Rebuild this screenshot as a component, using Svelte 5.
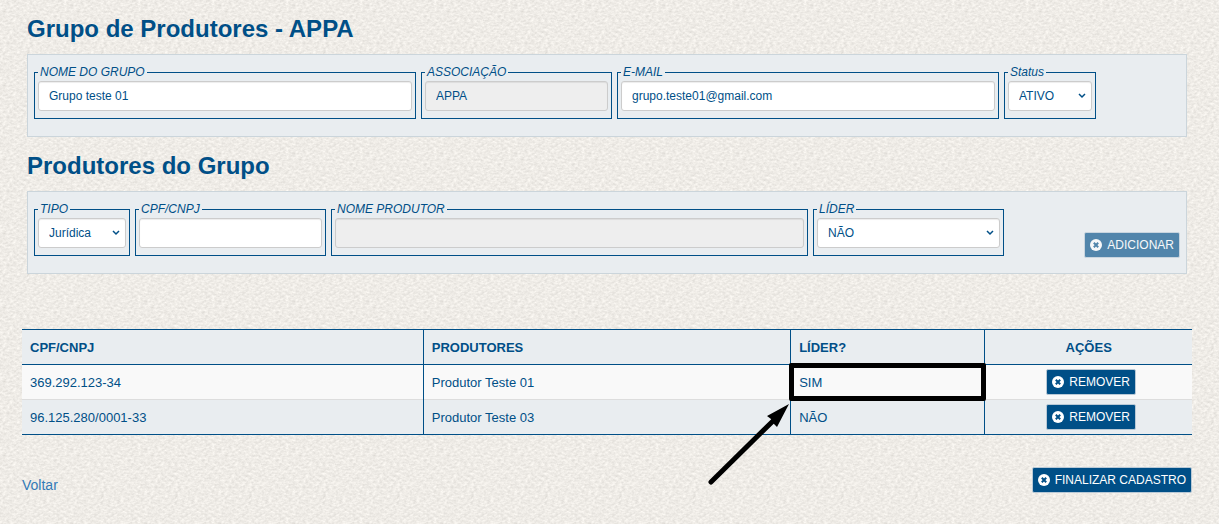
<script lang="ts">
  type Producer = { doc: string; name: string; leader: boolean };

  let groupName = $state('Grupo teste 01');
  let email = $state('grupo.teste01@gmail.com');
  let status = $state('ATIVO');

  let kind = $state('Jurídica');
  let doc = $state('');
  let producerName = $state('');
  let leader = $state('NÃO');

  let producers = $state<Producer[]>([
    { doc: '369.292.123-34', name: 'Produtor Teste 01', leader: true },
    { doc: '96.125.280/0001-33', name: 'Produtor Teste 03', leader: false }
  ]);

  function remove(i: number) {
    producers.splice(i, 1);
  }

  function add() {
    producers.push({ doc, name: producerName, leader: leader === 'SIM' });
    doc = '';
  }
</script>

{#snippet icon()}
  <svg class="icon" viewBox="0 0 12 12" aria-hidden="true">
    <circle cx="6" cy="6" r="6" fill="#fff" />
    <path d="M3.8 3.8L8.2 8.2M8.2 3.8L3.8 8.2" stroke="#004f87" stroke-width="2" />
  </svg>
{/snippet}

<main>
  <h1>Grupo de Produtores - APPA</h1>
  <form class="panel group-row">
    <fieldset>
      <legend><label for="group-name">NOME DO GRUPO</label></legend>
      <input id="group-name" type="text" bind:value={groupName} />
    </fieldset>
    <fieldset>
      <legend><label for="association">ASSOCIAÇÃO</label></legend>
      <input id="association" type="text" value="APPA" disabled />
    </fieldset>
    <fieldset>
      <legend><label for="email">E-MAIL</label></legend>
      <input id="email" type="email" bind:value={email} />
    </fieldset>
    <fieldset>
      <legend><label for="status">Status</label></legend>
      <select id="status" bind:value={status}>
        <option>ATIVO</option>
        <option>INATIVO</option>
      </select>
    </fieldset>
  </form>

  <h1>Produtores do Grupo</h1>
  <form class="panel producer-row">
    <fieldset>
      <legend><label for="kind">TIPO</label></legend>
      <select id="kind" bind:value={kind}>
        <option>Jurídica</option>
        <option>Física</option>
      </select>
    </fieldset>
    <fieldset>
      <legend><label for="doc">CPF/CNPJ</label></legend>
      <input id="doc" type="text" bind:value={doc} />
    </fieldset>
    <fieldset>
      <legend><label for="producer">NOME PRODUTOR</label></legend>
      <input id="producer" type="text" bind:value={producerName} disabled />
    </fieldset>
    <fieldset>
      <legend><label for="leader">LÍDER</label></legend>
      <select id="leader" bind:value={leader}>
        <option>NÃO</option>
        <option>SIM</option>
      </select>
    </fieldset>
    <button class="btn add" type="button" disabled={!producerName} onclick={add}>
      {@render icon()}ADICIONAR
    </button>
  </form>

  <table>
    <thead>
      <tr>
        <th class="col-doc">CPF/CNPJ</th>
        <th class="col-name">PRODUTORES</th>
        <th class="col-leader">LÍDER?</th>
        <th class="col-actions">AÇÕES</th>
      </tr>
    </thead>
    <tbody>
      {#each producers as p, i}
        <tr>
          <td>{p.doc}</td>
          <td>{p.name}</td>
          <td class:marked={p.leader}>
            {p.leader ? 'SIM' : 'NÃO'}
            {#if p.leader}
              <!-- Arrow pointing at the leader cell -->
              <svg class="arrow" viewBox="0 0 84 84" aria-hidden="true">
                <path d="M4 78L66 17" stroke="#000" stroke-width="5" stroke-linecap="round" />
                <path d="M82 0L60 12L64 15L66 19L70 23Z" fill="#000" />
              </svg>
            {/if}
          </td>
          <td class="actions">
            <button class="btn" type="button" onclick={() => remove(i)}>
              {@render icon()}REMOVER
            </button>
          </td>
        </tr>
      {/each}
    </tbody>
  </table>

  <footer>
    <a href="#voltar">Voltar</a>
    <button class="btn" type="button">{@render icon()}FINALIZAR CADASTRO</button>
  </footer>
</main>

<style>
  :global(body) {
    background-color: #eeebe6;
    background-image: url("data:image/svg+xml,%3Csvg xmlns='http://www.w3.org/2000/svg' width='74' height='74'%3E%3Cfilter id='n' x='0' y='0' width='100%25' height='100%25' color-interpolation-filters='sRGB'%3E%3CfeTurbulence type='fractalNoise' baseFrequency='.3 .45' numOctaves='3' stitchTiles='stitch'/%3E%3CfeColorMatrix values='.16 0 0 0 .857 .16 0 0 0 .845 .16 0 0 0 .825 0 0 0 0 1'/%3E%3C/filter%3E%3Crect width='74' height='74' filter='url(%23n)'/%3E%3C/svg%3E");
  }

  main {
    padding: 15px 27px 30px 22px;
    font-family: 'Liberation Sans', Arial, sans-serif;
    font-size: 13px;
    color: #004f87;
  }

  h1 {
    margin: 0 5px 11px;
    font-size: 24px;
    line-height: 28px;
    font-weight: 700;
  }

  .panel {
    display: grid;
    gap: 5px;
    margin: 0 5px 15px;
    padding: 10px 6px 17px;
    background: #e9edf0;
    border: 1px solid #cbd5db;
  }

  .group-row {
    grid-template-columns: 382fr 191fr 382fr 92fr 79fr;
  }

  .producer-row {
    grid-template-columns: 96fr 191fr 477fr 191fr 171fr;
    padding-bottom: 15px;
  }

  fieldset {
    min-width: 0;
    margin: 0;
    padding: 2px 3px 7px;
    border: 1px solid #004f87;
  }

  .producer-row fieldset {
    margin-bottom: 2px;
  }

  legend {
    padding: 0 2px;
    font-size: 12px;
    line-height: 14px;
    font-style: italic;
  }

  label {
    display: block;
  }

  input,
  select {
    display: block;
    box-sizing: border-box;
    width: 100%;
    height: 30px;
    padding: 0 10px;
    border: 1px solid #ccc;
    border-radius: 3px;
    background: #fff;
    box-shadow: inset 0 1px 1px rgba(0, 0, 0, 0.075);
    font-family: inherit;
    font-size: 12px;
    color: #004f87;
  }

  input:disabled {
    background: #eee;
  }

  select {
    appearance: none;
    background: #fff url("data:image/svg+xml,%3Csvg xmlns='http://www.w3.org/2000/svg' width='8' height='6'%3E%3Cpath d='M1 1L4 4L7 1' fill='none' stroke='%23004f87' stroke-width='1.5'/%3E%3C/svg%3E") no-repeat right 5px center;
  }

  .btn {
    display: inline-flex;
    align-items: center;
    gap: 5px;
    height: 26px;
    padding: 0 5px;
    border: 1px solid #b9c9d6;
    border-radius: 2px;
    background: #004f87;
    color: #fff;
    font-family: inherit;
    font-size: 12px;
    white-space: nowrap;
    cursor: pointer;
  }

  .btn:disabled {
    opacity: 0.65;
    cursor: not-allowed;
  }

  .icon {
    width: 12px;
    height: 12px;
    flex-shrink: 0;
  }

  .add {
    align-self: end;
    justify-self: end;
  }

  table {
    width: 100%;
    margin-top: 55px;
    table-layout: fixed;
    border-collapse: collapse;
    border-top: 1px solid #004f87;
    border-bottom: 1px solid #004f87;
  }

  th,
  td {
    box-sizing: border-box;
    height: 35px;
    padding: 0 8px;
    text-align: left;
    border-left: 1px solid #004f87;
  }

  th:first-child,
  td:first-child {
    border-left: none;
  }

  thead {
    border-bottom: 1px solid #004f87;
    background: #e9edf0;
  }

  tbody tr:nth-child(odd) {
    background: #f9f9f9;
  }

  tbody tr:nth-child(even) {
    background: #e9edf0;
  }

  tbody tr + tr {
    border-top: 1px solid #ddd;
  }

  .col-doc {
    width: 34.3%;
  }

  .col-name {
    width: 31.4%;
  }

  .col-leader {
    width: 16.6%;
  }

  .col-actions,
  .actions {
    text-align: center;
  }

  .actions {
    padding-left: 13px;
  }

  .actions .btn {
    vertical-align: middle;
  }

  .marked {
    position: relative;
  }

  .marked::after {
    content: '';
    position: absolute;
    inset: -2px;
    border: 5px solid #000;
    border-radius: 2px;
  }

  .arrow {
    position: absolute;
    top: 39px;
    right: 100%;
    width: 84px;
    height: 84px;
  }

  footer {
    display: flex;
    justify-content: space-between;
    align-items: end;
    margin-top: 32px;
    font-size: 14px;
  }

  a {
    color: #337ab7;
    text-decoration: none;
  }
</style>
